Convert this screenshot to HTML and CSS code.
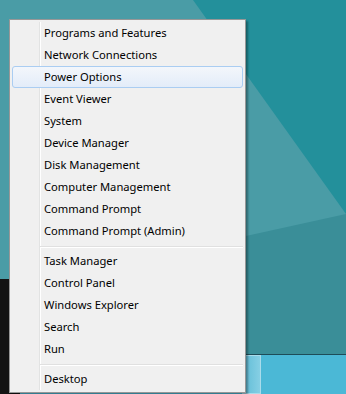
FILE: index.html
```html
<!DOCTYPE html>
<html>
<head>
    <meta charset="UTF-8">
    <title>Quick Link Menu</title>
    <link rel="stylesheet" href="styles.css">
</head>
<body>
<div class="desktop">
    <svg class="wallpaper" viewBox="0 0 346 394" width="346" height="394">
        <rect width="346" height="394" fill="#23909b"/>
        <polygon points="0,0 193,0 346,214 346,394 0,394" fill="#4a9ca6"/>
        <polygon points="246,236 346,214 346,394 246,394" fill="#3a8e98"/>
    </svg>
    <div class="taskbar">
        <div class="task-btn"></div>
    </div>
    <div class="dock-left"></div>

    <ul class="menu">
        <li class="item">Programs and Features</li>
        <li class="item">Network Connections</li>
        <li class="item hover">Power Options</li>
        <li class="item">Event Viewer</li>
        <li class="item">System</li>
        <li class="item">Device Manager</li>
        <li class="item">Disk Management</li>
        <li class="item">Computer Management</li>
        <li class="item">Command Prompt</li>
        <li class="item">Command Prompt (Admin)</li>
        <li class="sep"></li>
        <li class="item">Task Manager</li>
        <li class="item">Control Panel</li>
        <li class="item">Windows Explorer</li>
        <li class="item">Search</li>
        <li class="item">Run</li>
        <li class="sep"></li>
        <li class="item">Desktop</li>
    </ul>
</div>
</body>
</html>
```

FILE: styles.css
```css
*{
    margin: 0;
    padding: 0;
}
body{
    width: 346px;
    height: 394px;
    overflow: hidden;
}
.desktop{
    position: relative;
    width: 346px;
    height: 394px;
    overflow: hidden;
    padding: 19px 0 0 9px;
    box-sizing: border-box;
}
.wallpaper{
    position: absolute;
    left: 0;
    top: 0;
    display: block;
}
/* dark strip at bottom left */
.dock-left{
    position: absolute;
    left: 0;
    top: 279px;
    width: 20px;
    bottom: 0;
    background: #131313;
}
.taskbar{
    position: absolute;
    left: 0;
    right: 0;
    top: 354px;
    bottom: 0;
    background: #4bb8d6;
    border-top: 1px solid #1e4c58;
    padding-left: 242px;
}
.task-btn{
    width: 19px;
    height: 100%;
    box-sizing: border-box;
    border: 1px solid #a9dceb;
    background: linear-gradient(to right, #5fbcd6, #86cfe4);
}

.menu{
    position: relative;
    z-index: 1;
    list-style: none;
    width: 237px;
    height: 374px;
    box-sizing: border-box;
    padding: 2px;
    background: #f0f0f0;
    border: 1px solid #979797;
    box-shadow: 2px 2px 2px rgba(0,0,0,.35);
    font: 11.2px/22px "Noto Sans", "Open Sans", sans-serif;
    color: #000;
}
/* gutter line */
.menu::before{
    content: "";
    position: absolute;
    left: 29px;
    top: 2px;
    bottom: 2px;
    width: 1px;
    background: #e2e3e3;
    border-right: 1px solid #fff;
}
.item{
    position: relative;
    height: 22px;
    padding-left: 32px;
    white-space: nowrap;
}
.item.hover{
    padding-left: 31px;
    line-height: 20px;
    box-sizing: border-box;
    border: 1px solid #aacdf2;
    border-radius: 3px;
    background: linear-gradient(#f3f6fb, #e3ecf9);
}
.sep{
    position: relative;
    height: 1px;
    margin: 4px 0 2px 28px;
    background: #e0e0e0;
    border-bottom: 1px solid #fff;
}
```
